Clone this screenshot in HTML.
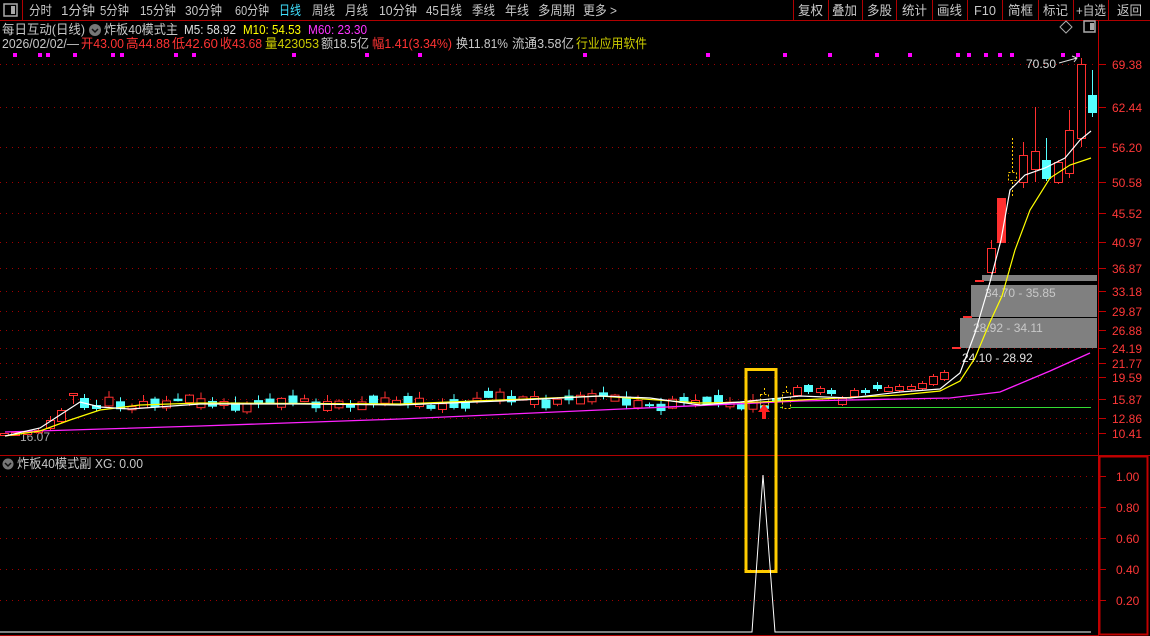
<!DOCTYPE html>
<html><head><meta charset="utf-8"><style>
body{margin:0;background:#000;width:1150px;height:636px;overflow:hidden;font-family:"Liberation Sans","Noto Sans CJK SC",sans-serif}
svg{display:block}
</style></head><body>
<svg id="s" width="1150" height="636" xmlns="http://www.w3.org/2000/svg" font-family="Liberation Sans, Noto Sans CJK SC, sans-serif">
<rect width="1150" height="636" fill="#000"/>
<line x1="0" y1="20.5" x2="1150" y2="20.5" stroke="#b00000"/>
<line x1="22.5" y1="0" x2="22.5" y2="20" stroke="#b00000"/>
<rect x="4" y="4" width="13" height="12" fill="none" stroke="#aaa" stroke-width="1.5"/>
<rect x="11" y="6" width="4" height="8" fill="#aaa"/>
<g id="t"></g>
<g stroke="#b00000"><line x1="793.5" y1="0" x2="793.5" y2="20"/><line x1="828.5" y1="0" x2="828.5" y2="20"/><line x1="862.5" y1="0" x2="862.5" y2="20"/><line x1="896.5" y1="0" x2="896.5" y2="20"/><line x1="932.5" y1="0" x2="932.5" y2="20"/><line x1="967.5" y1="0" x2="967.5" y2="20"/><line x1="1002.5" y1="0" x2="1002.5" y2="20"/><line x1="1038.5" y1="0" x2="1038.5" y2="20"/><line x1="1073.5" y1="0" x2="1073.5" y2="20"/><line x1="1108.5" y1="0" x2="1108.5" y2="20"/></g>
<circle cx="95" cy="30" r="6" fill="#777"/><path d="M92 29l3 3 3-3" stroke="#111" fill="none" stroke-width="1.5"/>
<path d="M1060 27l6-6 6 6-6 6z" fill="none" stroke="#aaa"/>
<rect x="1084" y="21" width="11" height="11" fill="none" stroke="#aaa" stroke-width="1.5"/><rect x="1090" y="23" width="4" height="7" fill="#aaa"/>
<line x1="1098.5" y1="21" x2="1098.5" y2="636" stroke="#c00000"/>
<line x1="0" y1="455.5" x2="1150" y2="455.5" stroke="#b00000"/>
<rect x="1099.5" y="456.5" width="48" height="178" fill="none" stroke="#c00000" stroke-width="2"/>
<line x1="0" y1="635.5" x2="1098" y2="635.5" stroke="#b00000"/>
<g id="grid"></g>
<g id="ax" font-size="12" fill="#ff3838"></g>
<rect x="960" y="318" width="137" height="30" fill="#808080"/>
<rect x="971" y="285" width="126" height="32" fill="#808080"/>
<rect x="982" y="275" width="115" height="6" fill="#808080"/>
<g font-size="12" fill="#c8c8c8"><text x="973" y="332">28.92 - 34.11</text><text x="985" y="297">34.70 - 35.85</text><text x="962" y="362" fill="#e0e0e0">24.10 - 28.92</text><text x="20" y="441" fill="#aaa">16.07</text><text x="1026" y="68" fill="#ddd">70.50</text></g>
<path d="M1059 63l18-5M1072 56l5 2-3 4" stroke="#ddd" fill="none"/>
<line x1="780" y1="407.5" x2="1091" y2="407.5" stroke="#33dd33"/>
<g id="c"></g>
<polyline fill="none" stroke="#ff22ff" stroke-width="1.3" points="5,432 200,426 400,419 600,410 800,401 950,398 1000,392 1050,371 1090,353"/>
<polyline fill="none" stroke="#ffff00" stroke-width="1.2" points="5,436 40,431 70,420 100,410 140,405 200,403 400,404 600,396 700,403 760,402 800,400 900,395 940,391 960,381 975,358 990,322 1002,296 1015,250 1030,210 1050,178 1070,165 1091,158"/>
<polyline fill="none" stroke="#fff" stroke-width="1.2" points="5,436 40,428 60,415 80,402 100,407 130,409 200,404 300,404 400,405 500,401 600,396 650,398 700,405 740,402 760,400 800,396 850,398 900,392 940,389 960,373 975,333 990,282 1001,240 1010,190 1025,175 1045,168 1065,158 1080,140 1091,131"/>
<rect x="746" y="369.5" width="30" height="202" fill="none" stroke="#ffcc00" stroke-width="3"/>
<path d="M764 404l-6 8h4v7h4v-7h4z" fill="#ff2020"/>
<circle cx="8" cy="464" r="5.5" fill="#777"/><path d="M5 463l3 3 3-3" stroke="#111" fill="none" stroke-width="1.5"/>
<polyline fill="none" stroke="#fff" points="0,632 752,632 763,475 775,632 1091,632"/>
</svg>
<script>
var s="http://www.w3.org/2000/svg";
function el(p,t,a,tx){var e=document.createElementNS(s,t);for(var k in a)e.setAttribute(k,a[k]);if(tx)e.textContent=tx;document.getElementById(p).appendChild(e);return e;}
function T(x1,x2,y,str,col,fs){el("t","text",{x:x1,y:y,textLength:x2-x1,lengthAdjust:"spacingAndGlyphs",fill:col||"#c8c8c8","font-size":fs||13},str);}
var tb=[[29,52,"分时"],[61,95,"1分钟"],[100,129,"5分钟"],[140,176,"15分钟"],[185,222,"30分钟"],[235,269,"60分钟"],[279,301,"日线","#3fe0ff"],[312,335,"周线"],[345,368,"月线"],[379,417,"10分钟"],[426,462,"45日线"],[472,495,"季线"],[505,529,"年线"],[538,575,"多周期"],[583,617,"更多 >"]];
tb.forEach(function(a){T(a[0],a[1],15,a[2],a[3]);});
[[798,823,"复权"],[832,857,"叠加"],[867,892,"多股"],[902,927,"统计"],[937,962,"画线"],[974,996,"F10"],[1008,1033,"简框"],[1043,1068,"标记"],[1076,1106,"+自选"],[1117,1142,"返回"]].forEach(function(a){T(a[0],a[1],15,a[2]);});
T(2,85,34,"每日互动(日线)");T(104,178,34,"炸板40模式主");T(184,236,34,"M5: 58.92","#e0e0e0");T(243,301,34,"M10: 54.53","#ffff00");T(308,367,34,"M60: 23.30","#ff33ff");
var R="#ff3333",Y="#cccc00",W="#c8c8c8";
[[2,79,"2026/02/02/—",W],[81,124,"开43.00",R],[126,170,"高44.88",R],[172,218,"低42.60",R],[220,262,"收43.68",R],[265,319,"量423053",Y],[321,369,"额18.5亿",W],[372,452,"幅1.41(3.34%)",R],[456,508,"换11.81%",W],[512,574,"流通3.58亿",W],[576,647,"行业应用软件",Y]].forEach(function(a){T(a[0],a[1],48,a[2],a[3]);});
T(17,143,468,"炸板40模式副  XG: 0.00");
var L=[["69.38",64],["62.44",107],["56.20",147],["50.58",182],["45.52",213],["40.97",242],["36.87",268],["33.18",291],["29.87",311],["26.88",330],["24.19",348],["21.77",363],["19.59",377],["15.87",399],["12.86",418],["10.41",433]];
L.forEach(function(l){el("grid","line",{x1:0,y1:l[1]+.5,x2:1098,y2:l[1]+.5,stroke:"#a00000","stroke-dasharray":"1 5"});el("ax","text",{x:1112,y:l[1]+5},l[0]);el("grid","line",{x1:1099,y1:l[1]+.5,x2:1106,y2:l[1]+.5,stroke:"#c00000"});});
[[.8,507],[.6,538],[.4,569],[.2,600],[1,476]].forEach(function(l){el("grid","line",{x1:0,y1:l[1]+.5,x2:1098,y2:l[1]+.5,stroke:"#a00000","stroke-dasharray":"1 5"});el("ax","text",{x:1116,y:l[1]+5},l[0].toFixed(2));el("grid","line",{x1:1099,y1:l[1]+.5,x2:1106,y2:l[1]+.5,stroke:"#c00000"});});
[15,40,48,75,113,122,176,194,294,367,420,585,708,785,830,877,910,958,969,986,1000,1012,1063,1078].forEach(function(x){el("c","rect",{x:x-2,y:53,width:4,height:4,fill:"#ff00ff"});});
function cd(x,t,b,h,lo,ty){var col=ty=="c"?"#55ffff":"#ff3030";if(ty=="y")col="#ffcc00";
el("c","line",{x1:x+.5,y1:h,x2:x+.5,y2:lo,stroke:col,"stroke-dasharray":ty=="y"?"2 2":""});
if(ty=="c"||ty=="f")el("c","rect",{x:x-4,y:t,width:9,height:Math.max(b-t,1.5),fill:col});
else el("c","rect",{x:x-4+.5,y:t+.5,width:8,height:Math.max(b-t,1),fill:"#000",stroke:col,"stroke-dasharray":ty=="y"?"2 2":""});}
var st=[[4,433,435,433,436,"r"],[15,432,435,431,436,"r"],[27,432,434,431,435,"r"],[38,430,432,428,434,"r"],[50,420,428,416,430,"r"],[61,410,421,408,423,"r"],[73,393,395,393,404,"r"],[84,398,408,394,410,"c"],[96,405,409,400,411,"c"]];
st.forEach(function(a){cd.apply(null,a)});
for(var i=9;i<67;i++){var x=5+i*11.5;var c=403+3*Math.sin(i*0.7)+2*Math.sin(i*1.9)-(i>40&&i<55?4:0);var h=2+Math.abs(Math.sin(i*2.3))*7;var ty=Math.sin(i*3.7)>0?"r":"c";cd(x,c-h/2,c+h/2,c-h/2-Math.abs(Math.sin(i*5.1))*6,c+h/2+Math.abs(Math.cos(i*4.3))*4,ty);}
[[764,394,405,388,412,"y"],[776,398,402,396,410,"c"],[786,392,408,386,410,"y"],[797,387,395,385,397,"r"],[808,385,392,384,394,"c"],[820,388,392,386,395,"r"],[831,390,394,388,396,"c"],[842,398,404,396,406,"r"],[854,390,396,388,398,"r"],[865,390,393,388,395,"c"],[877,385,389,382,391,"c"],[888,387,391,385,392,"r"],[899,386,390,384,392,"r"],[911,386,389,384,391,"r"],[922,383,388,381,390,"r"],[933,376,384,374,386,"r"],[944,372,379,370,381,"r"],[956,347,349,347,349,"f"],[967,316,318,316,318,"f"],[979,280,282,280,282,"f"],[991,248,272,240,274,"r"],[1001,198,243,198,243,"f"],[1012,172,180,138,198,"y"],[1023,155,182,142,188,"r"],[1035,151,169,107,182,"r"],[1046,160,179,138,181,"c"],[1058,162,182,160,184,"r"],[1069,130,173,110,178,"r"],[1081,64,138,58,147,"r"],[1092,95,113,70,117,"c"]].forEach(function(a){cd.apply(null,a)});
</script>
</body></html>
